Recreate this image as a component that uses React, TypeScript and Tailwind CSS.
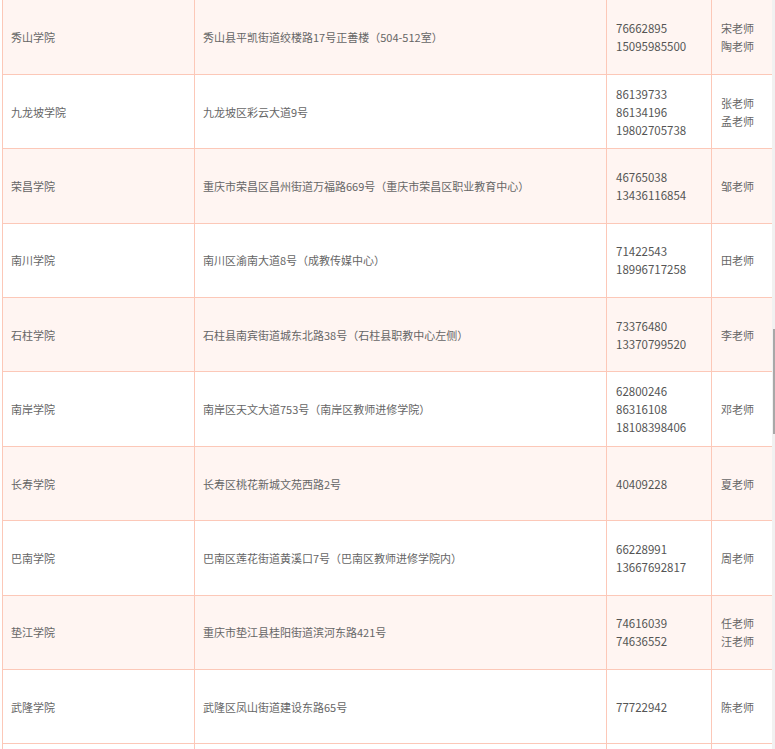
import React from "react";

type Row = {
  name: string;
  address: string;
  phones: string[];
  teachers: string[];
};

const rows: Row[] = [
  { name: "秀山学院", address: "秀山县平凯街道绞楼路17号正善楼（504-512室）", phones: ["76662895", "15095985500"], teachers: ["宋老师", "陶老师"] },
  { name: "九龙坡学院", address: "九龙坡区彩云大道9号", phones: ["86139733", "86134196", "19802705738"], teachers: ["张老师", "孟老师"] },
  { name: "荣昌学院", address: "重庆市荣昌区昌州街道万福路669号（重庆市荣昌区职业教育中心）", phones: ["46765038", "13436116854"], teachers: ["邹老师"] },
  { name: "南川学院", address: "南川区渝南大道8号（成教传媒中心）", phones: ["71422543", "18996717258"], teachers: ["田老师"] },
  { name: "石柱学院", address: "石柱县南宾街道城东北路38号（石柱县职教中心左侧）", phones: ["73376480", "13370799520"], teachers: ["李老师"] },
  { name: "南岸学院", address: "南岸区天文大道753号（南岸区教师进修学院）", phones: ["62800246", "86316108", "18108398406"], teachers: ["邓老师"] },
  { name: "长寿学院", address: "长寿区桃花新城文苑西路2号", phones: ["40409228"], teachers: ["夏老师"] },
  { name: "巴南学院", address: "巴南区莲花街道黄溪口7号（巴南区教师进修学院内）", phones: ["66228991", "13667692817"], teachers: ["周老师"] },
  { name: "垫江学院", address: "重庆市垫江县桂阳街道滨河东路421号", phones: ["74616039", "74636552"], teachers: ["任老师", "汪老师"] },
  { name: "武隆学院", address: "武隆区凤山街道建设东路65号", phones: ["77722942"], teachers: ["陈老师"] },
];

export default function App() {
  return (
    <div className="relative h-[749px] w-[775px] overflow-hidden bg-white font-['Noto_Sans_CJK_SC','Noto_Sans',sans-serif] text-[11px] leading-[18px] text-[#666]">
      <table className="ml-[2px] w-[770px] table-fixed border-collapse">
        <colgroup>
          <col className="w-[192px]" />
          <col className="w-[412px]" />
          <col className="w-[105px]" />
          <col className="w-[61px]" />
        </colgroup>
        <tbody>
          {rows.map((r, i) => (
            <tr key={i} className={i % 2 === 0 ? "bg-[#fff5f2]" : "bg-white"}>
              <td className="h-[74.4px] border border-t-0 border-[#fcc8b8] pl-[8px] align-middle">{r.name}</td>
              <td className="h-[74.4px] border border-t-0 border-[#fcc8b8] pl-[8px] align-middle">{r.address}</td>
              <td className="h-[74.4px] border border-t-0 border-[#fcc8b8] pl-[9px] align-middle text-[11.5px] text-[#555]">
                {r.phones.map((p) => (
                  <div key={p}>{p}</div>
                ))}
              </td>
              <td className="h-[74.4px] border border-t-0 border-[#fcc8b8] pl-[9px] align-middle">
                {r.teachers.map((t) => (
                  <div key={t}>{t}</div>
                ))}
              </td>
            </tr>
          ))}
          <tr className="bg-white">
            <td className="h-[74.4px] border border-t-0 border-[#fcc8b8]" />
            <td className="h-[74.4px] border border-t-0 border-[#fcc8b8]" />
            <td className="h-[74.4px] border border-t-0 border-[#fcc8b8]" />
            <td className="h-[74.4px] border border-t-0 border-[#fcc8b8]" />
          </tr>
        </tbody>
      </table>
      {/* scrollbar */}
      <div className="absolute right-0 top-0 h-full w-[3px] bg-[#f1f1f1]">
        <div className="absolute left-[1px] top-[329px] h-[105px] w-[2px] bg-[#a8a8a8]" />
      </div>
    </div>
  );
}
